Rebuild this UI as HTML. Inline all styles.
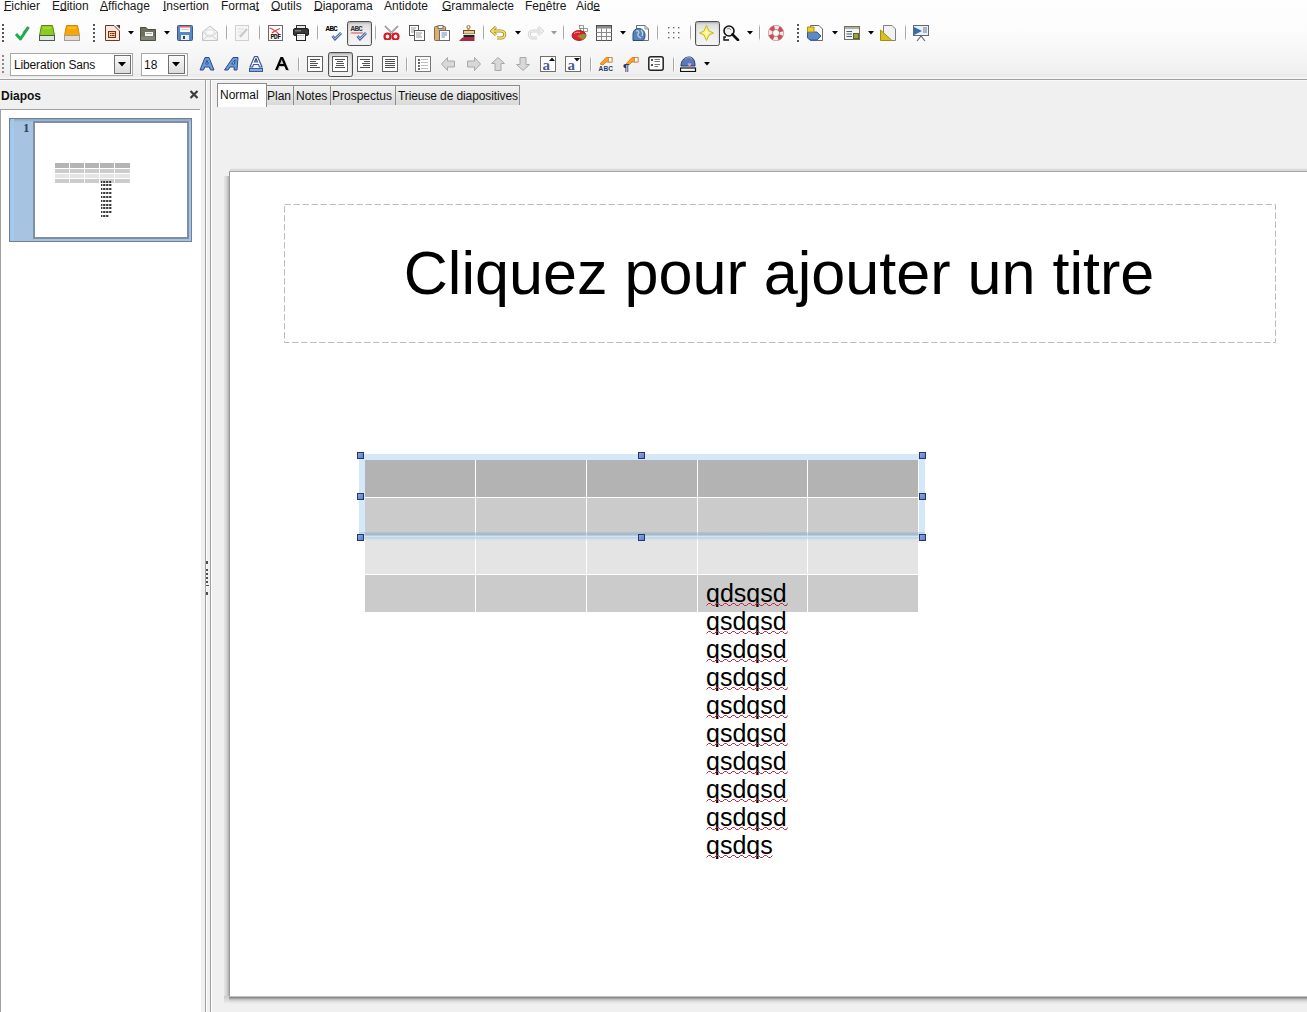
<!DOCTYPE html>
<html><head><meta charset="utf-8">
<style>
html,body{margin:0;padding:0;}
body{width:1307px;height:1012px;position:relative;overflow:hidden;background:#f0f0f0;font-family:"Liberation Sans",sans-serif;}
.a{position:absolute;}
#tb{left:0;top:0;width:1307px;height:79px;background:linear-gradient(#fefefe 0px,#fcfcfc 30px,#f7f7f7 50px,#f0f0f0 73px);}
#tbl1{left:0;top:74px;width:1307px;height:1px;background:#e7e7e7;}
#tbl2{left:0;top:76px;width:1307px;height:1px;background:#e9e9e9;}
#tbl3{left:0;top:77px;width:1307px;height:2px;background:#f5f5f5;}
#tbline{left:0;top:79px;width:1307px;height:1px;background:#a0a0a0;}
.menu{top:-2px;font-size:12px;color:#1a1a1a;white-space:nowrap;line-height:16px;}
.menu u{text-decoration:underline;text-underline-offset:0px;}
.tabt{font-size:12px;line-height:14px;color:#111;white-space:nowrap;}
.tab{top:85px;height:19px;border:1px solid #8c8c8c;border-bottom:none;background:linear-gradient(#f2f2f2,#d9d9d9);font-size:12px;line-height:18px;color:#111;white-space:nowrap;}
</style></head><body>
<div id="tb" class="a"></div>
<div id="tbl1" class="a"></div>
<div id="tbl2" class="a"></div>
<div id="tbl3" class="a"></div>
<div id="tbline" class="a"></div>

<!-- TB START -->
<svg class="a" style="left:2px;top:24px" width="2" height="19" ><rect x="0" y="0" width="2" height="2" fill="#555"/><rect x="0" y="4" width="2" height="2" fill="#555"/><rect x="0" y="8" width="2" height="2" fill="#555"/><rect x="0" y="12" width="2" height="2" fill="#555"/><rect x="0" y="16" width="2" height="2" fill="#555"/></svg>
<svg class="a" style="left:14px;top:25px" width="16" height="16" ><path d="M2,9 L6.5,14 L14.5,2" fill="none" stroke="#1fae4e" stroke-width="3" stroke-linejoin="round"/><path d="M9,8 L14.5,2" fill="none" stroke="#4a8a6a" stroke-width="2" opacity="0.6"/></svg>
<svg class="a" style="left:39px;top:25px" width="17" height="16" ><path d="M2.5,0.5 L13.5,0.5 L15.5,10.5 L0.5,10.5 Z" fill="#8ccc1c" stroke="#5b8a12"/><rect x="0.5" y="10.5" width="15" height="5" fill="#dfe6dc" stroke="#4d5a55"/><path d="M4,3 L12,3" stroke="#b6e85a"/></svg>
<svg class="a" style="left:64px;top:25px" width="17" height="16" ><path d="M2.5,0.5 L13.5,0.5 L15.5,10.5 L0.5,10.5 Z" fill="#f6a800" stroke="#d08a10"/><rect x="0.5" y="10.5" width="15" height="5" fill="#e2dcd8" stroke="#a49c98"/><path d="M4,3 L12,3" stroke="#ffd060"/></svg>
<svg class="a" style="left:93px;top:24px" width="2" height="19" ><rect x="0" y="0" width="2" height="2" fill="#555"/><rect x="0" y="4" width="2" height="2" fill="#555"/><rect x="0" y="8" width="2" height="2" fill="#555"/><rect x="0" y="12" width="2" height="2" fill="#555"/><rect x="0" y="16" width="2" height="2" fill="#555"/></svg>
<svg class="a" style="left:105px;top:25px" width="15" height="16" ><path d="M0.5,0.5 L9,0.5 L14.5,6 L14.5,15.5 L0.5,15.5 Z" fill="#fbe6d8" stroke="#5e3c2c"/><path d="M11,0 L15,0 L15,4 Z" fill="#5e3c2c"/><rect x="3.5" y="6.5" width="7" height="6" fill="#f6c8a8" stroke="#6a3a20"/><rect x="5" y="8" width="1.5" height="1" fill="#6a3a20"/><rect x="7" y="8" width="2.5" height="1" fill="#6a3a20"/><rect x="5" y="10" width="1.5" height="1" fill="#6a3a20"/><rect x="7" y="10" width="2.5" height="1" fill="#6a3a20"/></svg>
<svg class="a" style="left:128px;top:31px" width="6" height="4" ><path d="M0,0 L6,0 L3,3.5 Z" fill="#000"/></svg>
<svg class="a" style="left:140px;top:26px" width="17" height="15" ><path d="M0.5,1.5 L6,1.5 L8,3.5 L15.5,3.5 L15.5,14.5 L0.5,14.5 Z" fill="#6b7060" stroke="#4a4e40"/><rect x="5" y="6" width="8" height="4" fill="#f4f4f0"/><rect x="6" y="7" width="6" height="1" fill="#aaa"/><rect x="1" y="10.5" width="14" height="3.5" fill="#80867a"/></svg>
<svg class="a" style="left:164px;top:31px" width="6" height="4" ><path d="M0,0 L6,0 L3,3.5 Z" fill="#000"/></svg>
<svg class="a" style="left:177px;top:25px" width="16" height="16" ><rect x="0.5" y="0.5" width="15" height="15" rx="1" fill="#5c86c0" stroke="#3c5a8a"/><rect x="3" y="1" width="10" height="6" fill="#f8f8f8"/><rect x="3" y="1" width="10" height="1.5" fill="#e86060"/><rect x="4" y="4" width="8" height="1" fill="#c8d4e8"/><rect x="4" y="10" width="8" height="5" fill="#e8eef6"/><rect x="6" y="11" width="2" height="3" fill="#345"/></svg>
<svg class="a" style="left:202px;top:25px" width="17" height="16" ><path d="M0.5,7 L8,1 L15.5,7 L15.5,15.5 L0.5,15.5 Z" fill="#f4f4f4" stroke="#c4c4c4"/><path d="M0.5,7 L8,12 L15.5,7 M0.5,15.5 L6,10.5 M15.5,15.5 L10,10.5" fill="none" stroke="#cfcfcf"/><rect x="4" y="5" width="8" height="5" fill="#fafafa" stroke="#d8d8d8" stroke-width="0.8"/></svg>
<div class="a" style="left:226px;top:24px;width:1px;height:17px;background:linear-gradient(rgba(170,170,170,0),#a8a8a8 20%,#a8a8a8 80%,rgba(170,170,170,0))"></div>
<div class="a" style="left:227px;top:24px;width:1px;height:17px;background:rgba(255,255,255,0.7)"></div>
<svg class="a" style="left:235px;top:25px" width="14" height="16" ><rect x="0.5" y="0.5" width="13" height="15" fill="#f6f6f6" stroke="#d0d0d0"/><path d="M3,4 L9,4 M3,7 L7,7 M3,10 L6,10" stroke="#dcdcdc"/><path d="M5,12 L12,4" stroke="#c8c8c8" stroke-width="2"/></svg>
<div class="a" style="left:259px;top:24px;width:1px;height:17px;background:linear-gradient(rgba(170,170,170,0),#a8a8a8 20%,#a8a8a8 80%,rgba(170,170,170,0))"></div>
<div class="a" style="left:260px;top:24px;width:1px;height:17px;background:rgba(255,255,255,0.7)"></div>
<svg class="a" style="left:268px;top:25px" width="15" height="16" ><rect x="0.5" y="0.5" width="14" height="15" fill="#fafafa" stroke="#6a6a6a"/><path d="M1.5,3 C5,4 8,6 11,9.5 M4,8 C6,6 9,4.5 12,3.5" fill="none" stroke="#e04048" stroke-width="1.3"/><text x="7.5" y="14" font-family="Liberation Mono" font-weight="bold" font-size="6.5" text-anchor="middle" fill="#111" letter-spacing="-0.5">PDF</text></svg>
<svg class="a" style="left:293px;top:25px" width="17" height="16" ><rect x="3.5" y="0.5" width="9" height="4" fill="#e8e8e8" stroke="#333"/><rect x="0.5" y="3.5" width="15" height="7" rx="1.5" fill="#3a3a3a" stroke="#1e1e1e"/><rect x="3.5" y="8.5" width="9" height="7" fill="#f4f4f4" stroke="#222"/><rect x="4" y="10" width="7" height="1" fill="#bbb"/><rect x="2" y="5" width="6" height="1.5" fill="#777"/></svg>
<div class="a" style="left:317px;top:24px;width:1px;height:17px;background:linear-gradient(rgba(170,170,170,0),#a8a8a8 20%,#a8a8a8 80%,rgba(170,170,170,0))"></div>
<div class="a" style="left:318px;top:24px;width:1px;height:17px;background:rgba(255,255,255,0.7)"></div>
<svg class="a" style="left:325px;top:25px" width="18" height="16" ><text x="0.5" y="6" font-family="Liberation Mono" font-weight="bold" font-size="7.5" fill="#000" letter-spacing="-0.6">ABC</text><path d="M7.5,11 L10,14 L16,8" fill="none" stroke="#2a4a8a" stroke-width="2.6"/><path d="M7.5,11 L10,14 L16,8" fill="none" stroke="#a8c4ec" stroke-width="1.1"/></svg>
<div class="a" style="left:347px;top:21px;width:23px;height:23px;border:1px solid #505050;border-radius:2.5px;background:linear-gradient(#d8d8d8,#ececec 40%,#f4f4f4);box-shadow:inset 0 1px 2px rgba(0,0,0,0.25)"></div>
<svg class="a" style="left:350px;top:25px" width="18" height="16" ><text x="0.5" y="6" font-family="Liberation Mono" font-weight="bold" font-size="7.5" fill="#333" letter-spacing="-0.6">ABC</text><path d="M1,8.5 L2,7.5 L3,8.5 L4,7.5 L5,8.5 L6,7.5 L7,8.5 L8,7.5 L9,8.5 L10,7.5 L11,8.5 L12,7.5 L13,8.5" fill="none" stroke="#d02030" stroke-width="0.9"/><path d="M7.5,11 L10,14 L16,8" fill="none" stroke="#2a4a8a" stroke-width="2.6"/><path d="M7.5,11 L10,14 L16,8" fill="none" stroke="#a8c4ec" stroke-width="1.1"/></svg>
<div class="a" style="left:375px;top:24px;width:1px;height:17px;background:linear-gradient(rgba(170,170,170,0),#a8a8a8 20%,#a8a8a8 80%,rgba(170,170,170,0))"></div>
<div class="a" style="left:376px;top:24px;width:1px;height:17px;background:rgba(255,255,255,0.7)"></div>
<svg class="a" style="left:383px;top:25px" width="18" height="15" ><path d="M2,1 L11,10 M15,1 L6,10" stroke="#777" stroke-width="1.6"/><path d="M2.5,1 L10,9 M14.5,1 L7,9" stroke="#eee" stroke-width="0.6"/><circle cx="4.5" cy="11.5" r="3" fill="none" stroke="#d41a22" stroke-width="2.2"/><circle cx="12.5" cy="11.5" r="3" fill="none" stroke="#d41a22" stroke-width="2.2"/></svg>
<svg class="a" style="left:409px;top:25px" width="17" height="16" ><rect x="0.5" y="0.5" width="9" height="10" fill="#fff" stroke="#555"/><path d="M2,3 L7,3 M2,5 L6,5 M2,7 L7,7" stroke="#999"/><rect x="5.5" y="5.5" width="10" height="10" fill="#fff" stroke="#555"/><path d="M7,8 L13,8 M7,10 L12,10 M7,12 L13,12" stroke="#999"/></svg>
<svg class="a" style="left:434px;top:25px" width="16" height="16" ><rect x="0.5" y="1.5" width="11" height="14" rx="1" fill="#d8b070" stroke="#8a6a3a"/><rect x="4" y="0.5" width="5" height="3" fill="#eee" stroke="#777"/><rect x="5.5" y="5.5" width="10" height="10" fill="#fff" stroke="#6a6a6a"/><path d="M7.5,8 L13,8 M7.5,10 L13,10 M7.5,12 L11,12" stroke="#6a8ac0"/></svg>
<svg class="a" style="left:459px;top:25px" width="17" height="16" ><circle cx="9.5" cy="2" r="1.6" fill="none" stroke="#9a7030"/><rect x="8.5" y="3" width="2" height="3" fill="#c89040"/><rect x="4.5" y="5.5" width="11" height="3" fill="#f0c890" stroke="#7a5020"/><rect x="5" y="8.5" width="10" height="1.5" fill="#c8f0c8"/><rect x="4.5" y="10" width="11" height="2" fill="#222"/><path d="M0,16 L3,13 L5,12 L15.5,12 L15.5,16 Z" fill="#a82a4a"/></svg>
<div class="a" style="left:483px;top:24px;width:1px;height:17px;background:linear-gradient(rgba(170,170,170,0),#a8a8a8 20%,#a8a8a8 80%,rgba(170,170,170,0))"></div>
<div class="a" style="left:484px;top:24px;width:1px;height:17px;background:rgba(255,255,255,0.7)"></div>
<svg class="a" style="left:490px;top:26px" width="18" height="14" ><path d="M6,1 L1.5,5 L6,9 M1.5,5 L11,5 C16,5 16,12 11,12 L7,12" fill="none" stroke="#a08a20" stroke-width="3" stroke-linejoin="round"/><path d="M6,1 L1.5,5 L6,9 M1.5,5 L11,5 C16,5 16,12 11,12 L7,12" fill="none" stroke="#f6e070" stroke-width="1.4" stroke-linejoin="round"/></svg>
<svg class="a" style="left:515px;top:31px" width="6" height="4" ><path d="M0,0 L6,0 L3,3.5 Z" fill="#000"/></svg>
<svg class="a" style="left:526px;top:26px" width="18" height="14" ><path d="M12,1 L16.5,5 L12,9 M16.5,5 L7,5 C2,5 2,12 7,12 L11,12" fill="none" stroke="#d4d4d4" stroke-width="3" stroke-linejoin="round"/><path d="M12,1 L16.5,5 L12,9 M16.5,5 L7,5 C2,5 2,12 7,12 L11,12" fill="none" stroke="#f2f2f2" stroke-width="1.2" stroke-linejoin="round"/></svg>
<svg class="a" style="left:551px;top:31px" width="6" height="4" ><path d="M0,0 L6,0 L3,3.5 Z" fill="#999"/></svg>
<div class="a" style="left:563px;top:24px;width:1px;height:17px;background:linear-gradient(rgba(170,170,170,0),#a8a8a8 20%,#a8a8a8 80%,rgba(170,170,170,0))"></div>
<div class="a" style="left:564px;top:24px;width:1px;height:17px;background:rgba(255,255,255,0.7)"></div>
<svg class="a" style="left:571px;top:25px" width="18" height="16" ><rect x="8.5" y="0.5" width="4" height="3" fill="#fff" stroke="#7a8a7a" stroke-width="0.8"/><rect x="12.5" y="3.5" width="4" height="3" fill="#fff" stroke="#7a8a7a" stroke-width="0.8"/><rect x="9.5" y="3.5" width="3" height="3" fill="#fff" stroke="#7a8a7a" stroke-width="0.8"/><ellipse cx="8" cy="10.5" rx="7" ry="5" fill="#e0202a" stroke="#8a1018" stroke-width="0.8"/><path d="M6,11 C9,10 12,8 15,9.5 C15,12 14,14 12,15 Z" fill="#8aa030" opacity="0.9"/><path d="M3,8.5 C5,7 7,7 9,7.5" stroke="#ff9a9a" fill="none"/></svg>
<svg class="a" style="left:596px;top:25px" width="17" height="16" ><rect x="0.5" y="0.5" width="15" height="15" fill="#fafafa" stroke="#505050"/><rect x="1" y="1" width="14" height="2.5" fill="#8a8a8a"/><path d="M0.5,7.5 L15.5,7.5 M0.5,11.5 L15.5,11.5 M5.5,3.5 L5.5,15.5 M10.5,3.5 L10.5,15.5" stroke="#8a8a8a"/></svg>
<svg class="a" style="left:620px;top:31px" width="6" height="4" ><path d="M0,0 L6,0 L3,3.5 Z" fill="#000"/></svg>
<svg class="a" style="left:632px;top:25px" width="18" height="16" ><path d="M4.5,0.5 L13,0.5 L16.5,4 L16.5,15.5 L4.5,15.5 Z" fill="#fafafa" stroke="#707070"/><path d="M13,0.5 L13,4 L16.5,4" fill="none" stroke="#909090"/><path d="M1,15.5 L1,9 C1,5.5 3.5,3.5 6.5,3.5 C10.5,3.5 13,6.5 13,10 C13,13 12,15 11,15.5 Z" fill="#5a84b8" stroke="#2a4a78"/><path d="M4,6 C6,5 8,7 6,9 C5,11 7,12 9,13 M9,5 C11,7 11,9 10,11" stroke="#c0d8f0" fill="none" stroke-width="1.2"/></svg>
<div class="a" style="left:657px;top:24px;width:1px;height:17px;background:linear-gradient(rgba(170,170,170,0),#a8a8a8 20%,#a8a8a8 80%,rgba(170,170,170,0))"></div>
<div class="a" style="left:658px;top:24px;width:1px;height:17px;background:rgba(255,255,255,0.7)"></div>
<svg class="a" style="left:668px;top:27px" width="12" height="12" ><rect x="0" y="0" width="1.4" height="1.4" fill="#6a6a6a"/><rect x="0" y="5" width="1.4" height="1.4" fill="#6a6a6a"/><rect x="0" y="10" width="1.4" height="1.4" fill="#6a6a6a"/><rect x="5" y="0" width="1.4" height="1.4" fill="#6a6a6a"/><rect x="5" y="5" width="1.4" height="1.4" fill="#6a6a6a"/><rect x="5" y="10" width="1.4" height="1.4" fill="#6a6a6a"/><rect x="10" y="0" width="1.4" height="1.4" fill="#6a6a6a"/><rect x="10" y="5" width="1.4" height="1.4" fill="#6a6a6a"/><rect x="10" y="10" width="1.4" height="1.4" fill="#6a6a6a"/></svg>
<div class="a" style="left:690px;top:24px;width:1px;height:17px;background:linear-gradient(rgba(170,170,170,0),#a8a8a8 20%,#a8a8a8 80%,rgba(170,170,170,0))"></div>
<div class="a" style="left:691px;top:24px;width:1px;height:17px;background:rgba(255,255,255,0.7)"></div>
<div class="a" style="left:695px;top:21px;width:23px;height:23px;border:1px solid #505050;border-radius:2.5px;background:linear-gradient(#d8d8d8,#ececec 40%,#f4f4f4);box-shadow:inset 0 1px 2px rgba(0,0,0,0.25)"></div>
<svg class="a" style="left:699px;top:25px" width="16" height="16" ><path d="M7.5,0.5 L10,6 L14.5,8 L10,10 L7.5,15.5 L5,10 L0.5,8 L5,6 Z" fill="#f8f070" stroke="#c8b820"/><path d="M7.5,4 L9,7 L11,8 L9,9 L7.5,12 L6,9 L4,8 L6,7 Z" fill="#fff8b0"/></svg>
<svg class="a" style="left:723px;top:25px" width="17" height="16" ><circle cx="6" cy="6" r="5" fill="#f0f0f0" stroke="#111" stroke-width="1.6"/><path d="M3,12 L1,12 L1,15 L6,15" fill="none" stroke="#111" stroke-width="1.4"/><path d="M9.5,9.5 L15,15" stroke="#111" stroke-width="2.6" stroke-linecap="round"/><path d="M4,4 C5,3 7,3 8,5" stroke="#888" fill="none"/></svg>
<svg class="a" style="left:747px;top:31px" width="6" height="4" ><path d="M0,0 L6,0 L3,3.5 Z" fill="#000"/></svg>
<div class="a" style="left:759px;top:24px;width:1px;height:17px;background:linear-gradient(rgba(170,170,170,0),#a8a8a8 20%,#a8a8a8 80%,rgba(170,170,170,0))"></div>
<div class="a" style="left:760px;top:24px;width:1px;height:17px;background:rgba(255,255,255,0.7)"></div>
<svg class="a" style="left:768px;top:25px" width="17" height="16" ><circle cx="8" cy="8" r="5.6" fill="none" stroke="#f4e8e8" stroke-width="4.2"/><circle cx="8" cy="8" r="5.6" fill="none" stroke="#d84858" stroke-width="4.2" stroke-dasharray="4.4 4.4" stroke-dashoffset="-2.2"/><circle cx="8" cy="8" r="7.7" fill="none" stroke="#9a7a7a" stroke-width="0.6"/><circle cx="8" cy="8" r="3.5" fill="none" stroke="#8a7060" stroke-width="0.7"/></svg>
<svg class="a" style="left:797px;top:24px" width="2" height="20" ><rect x="0" y="0" width="2" height="2" fill="#555"/><rect x="0" y="4" width="2" height="2" fill="#555"/><rect x="0" y="8" width="2" height="2" fill="#555"/><rect x="0" y="12" width="2" height="2" fill="#555"/><rect x="0" y="16" width="2" height="2" fill="#555"/></svg>
<svg class="a" style="left:807px;top:25px" width="17" height="16" ><path d="M3.5,0.5 L12,0.5 L15.5,4 L15.5,15.5 L3.5,15.5 Z" fill="#f8f8f8" stroke="#6a6a6a"/><path d="M0.5,7 L10,7 L14,11 L10,15 L3,15 L0.5,13 Z" fill="#5a8ac8" stroke="#305a98"/><path d="M0.5,2 L7,2 L7,7 L0.5,7 Z" fill="#f0d020" stroke="#b09010"/></svg>
<svg class="a" style="left:832px;top:31px" width="6" height="4" ><path d="M0,0 L6,0 L3,3.5 Z" fill="#000"/></svg>
<svg class="a" style="left:844px;top:26px" width="17" height="15" ><rect x="0.5" y="0.5" width="15" height="13" fill="#f4f4f0" stroke="#707060"/><rect x="1" y="1" width="14" height="2" fill="#b0b0a0"/><path d="M2.5,5.5 L8,5.5 M2.5,8 L8,8 M2.5,10.5 L8,10.5" stroke="#3a5a9a" stroke-width="1.2"/><rect x="9.5" y="7.5" width="5" height="5" fill="#a0a040" stroke="#606020"/></svg>
<svg class="a" style="left:868px;top:31px" width="6" height="4" ><path d="M0,0 L6,0 L3,3.5 Z" fill="#000"/></svg>
<svg class="a" style="left:880px;top:25px" width="17" height="16" ><path d="M3.5,0.5 L12,0.5 L15.5,4 L15.5,15.5 L3.5,15.5 Z" fill="#f2f2f6" stroke="#808080"/><path d="M0.5,5 L0.5,15.5 L12,15.5 Z" fill="#d8c020" stroke="#a09010"/></svg>
<div class="a" style="left:905px;top:24px;width:1px;height:17px;background:linear-gradient(rgba(170,170,170,0),#a8a8a8 20%,#a8a8a8 80%,rgba(170,170,170,0))"></div>
<div class="a" style="left:906px;top:24px;width:1px;height:17px;background:rgba(255,255,255,0.7)"></div>
<svg class="a" style="left:913px;top:25px" width="17" height="17" ><rect x="0.5" y="0.5" width="15" height="10" fill="#e8f0f8" stroke="#5a6a7a"/><path d="M1,2 L9,6 L1,10 Z" fill="#3a6aaa"/><path d="M10,3 L14,3 M10,5 L14,5 M10,7 L14,7" stroke="#6a7a8a"/><path d="M8,11 L4,16 M8,11 L12,16" stroke="#6a6a6a" stroke-width="1.2"/></svg>
<svg class="a" style="left:2px;top:55px" width="2" height="18" ><rect x="0" y="0" width="2" height="2" fill="#8a8a8a"/><rect x="0" y="4" width="2" height="2" fill="#8a8a8a"/><rect x="0" y="8" width="2" height="2" fill="#8a8a8a"/><rect x="0" y="12" width="2" height="2" fill="#8a8a8a"/><rect x="0" y="16" width="2" height="2" fill="#8a8a8a"/></svg>
<div class="a" style="left:10px;top:53px;width:121px;height:21px;border:1px solid #a8a8a8;background:#fff"></div>
<div class="a" style="left:114px;top:55px;width:15px;height:17px;border:1px solid #707070;background:linear-gradient(#fafafa,#dcdcdc)"></div>
<svg class="a" style="left:118px;top:62px" width="9" height="5" ><path d="M0,0 L8,0 L4,4.5 Z" fill="#000"/></svg>
<div class="a" style="left:14px;top:58px;font-size:12px;line-height:14px;color:#111;white-space:nowrap;letter-spacing:-0.15px">Liberation Sans</div>
<div class="a" style="left:141px;top:53px;width:45px;height:21px;border:1px solid #a8a8a8;background:#fff"></div>
<div class="a" style="left:168px;top:55px;width:15px;height:17px;border:1px solid #707070;background:linear-gradient(#fafafa,#dcdcdc)"></div>
<svg class="a" style="left:172px;top:62px" width="9" height="5" ><path d="M0,0 L8,0 L4,4.5 Z" fill="#000"/></svg>
<div class="a" style="left:144px;top:58px;font-size:12px;line-height:14px;color:#111;white-space:nowrap">18</div>
<svg class="a" style="left:199px;top:57px" width="17" height="14" ><path d="M1,13 L6,0.5 L10,0.5 L15,13 L11.5,13 L10.3,10 L5.7,10 L4.5,13 Z M6.7,7 L9.3,7 L8,3.5 Z" fill="#6a9ad8" stroke="#2a4a8a" stroke-width="1" fill-rule="evenodd"/></svg>
<svg class="a" style="left:224px;top:57px" width="17" height="14" ><path d="M0.5,13 L9,0.5 L14,0.5 L13,13 L10,13 L10.3,10 L6,10 L4,13 Z M7.8,7 L10.5,7 L11,3 Z" fill="#6a9ad8" stroke="#2a4a8a" stroke-width="1" fill-rule="evenodd"/></svg>
<svg class="a" style="left:249px;top:56px" width="16" height="17" ><path d="M1,11 L5.5,0.5 L8.5,0.5 L13,11 L10.5,11 L9.5,8.5 L4.5,8.5 L3.5,11 Z M5.5,6 L8.5,6 L7,2.5 Z" fill="#ffffff" stroke="#3a5a9a" stroke-width="1.2" fill-rule="evenodd"/><rect x="0.5" y="12.5" width="13" height="3" fill="#8aaad8" stroke="#3a5a9a"/></svg>
<svg class="a" style="left:274px;top:56px" width="17" height="16" ><path d="M2,15 L7.5,2 L10,2 L15.5,15 L13,15 L11.3,11 L6.2,11 L4.5,15 Z" fill="#aaa" opacity="0.6"/><path d="M1,14 L6.5,1 L9,1 L14.5,14 L12,14 L10.3,10 L5.2,10 L3.5,14 Z M6,8 L9.5,8 L7.75,3.5 Z" fill="#000" fill-rule="evenodd"/></svg>
<div class="a" style="left:298px;top:56px;width:1px;height:17px;background:linear-gradient(rgba(170,170,170,0),#a8a8a8 20%,#a8a8a8 80%,rgba(170,170,170,0))"></div>
<div class="a" style="left:299px;top:56px;width:1px;height:17px;background:rgba(255,255,255,0.7)"></div>
<svg class="a" style="left:307px;top:56px" width="16" height="16" ><rect x="0.5" y="0.5" width="15" height="15" fill="#fff" stroke="#606060"/><rect x="3" y="3" width="10" height="1" fill="#505050"/><rect x="3" y="5" width="6" height="1" fill="#505050"/><rect x="3" y="7" width="8" height="1" fill="#505050"/><rect x="3" y="9" width="7" height="1" fill="#505050"/><rect x="3" y="11" width="10" height="1" fill="#505050"/></svg>
<div class="a" style="left:328px;top:52px;width:23px;height:23px;border:1px solid #505050;border-radius:2.5px;background:linear-gradient(#d8d8d8,#ececec 40%,#f4f4f4);box-shadow:inset 0 1px 2px rgba(0,0,0,0.25)"></div>
<svg class="a" style="left:332px;top:56px" width="16" height="16" ><rect x="0.5" y="0.5" width="15" height="15" fill="#fff" stroke="#606060"/><rect x="3" y="3" width="10" height="1" fill="#505050"/><rect x="5" y="5" width="6" height="1" fill="#505050"/><rect x="4" y="7" width="8" height="1" fill="#505050"/><rect x="4" y="9" width="8" height="1" fill="#505050"/><rect x="3" y="11" width="10" height="1" fill="#505050"/></svg>
<svg class="a" style="left:357px;top:56px" width="16" height="16" ><rect x="0.5" y="0.5" width="15" height="15" fill="#fff" stroke="#606060"/><rect x="3" y="3" width="10" height="1" fill="#505050"/><rect x="7" y="5" width="6" height="1" fill="#505050"/><rect x="5" y="7" width="8" height="1" fill="#505050"/><rect x="6" y="9" width="7" height="1" fill="#505050"/><rect x="3" y="11" width="10" height="1" fill="#505050"/></svg>
<svg class="a" style="left:382px;top:56px" width="16" height="16" ><rect x="0.5" y="0.5" width="15" height="15" fill="#fff" stroke="#606060"/><rect x="3" y="3" width="10" height="1" fill="#505050"/><rect x="3" y="5" width="10" height="1" fill="#505050"/><rect x="3" y="7" width="10" height="1" fill="#505050"/><rect x="3" y="9" width="10" height="1" fill="#505050"/><rect x="3" y="11" width="10" height="1" fill="#505050"/></svg>
<div class="a" style="left:406px;top:56px;width:1px;height:17px;background:linear-gradient(rgba(170,170,170,0),#a8a8a8 20%,#a8a8a8 80%,rgba(170,170,170,0))"></div>
<div class="a" style="left:407px;top:56px;width:1px;height:17px;background:rgba(255,255,255,0.7)"></div>
<svg class="a" style="left:415px;top:56px" width="16" height="16" ><rect x="0.5" y="0.5" width="15" height="15" fill="#fff" stroke="#7a7a7a"/><rect x="3" y="3" width="2" height="2" fill="#666"/><rect x="3" y="6" width="2" height="2" fill="#666"/><rect x="3" y="9" width="2" height="2" fill="#666"/><rect x="3" y="12" width="2" height="2" fill="#666"/><path d="M6,3.5 L13,3.5 M6,6.5 L13,6.5 M6,9.5 L13,9.5 M6,12.5 L13,12.5" stroke="#bbb"/></svg>
<svg class="a" style="left:441px;top:57px" width="14" height="14" ><path d="M0.5,7 L6.5,0.5 L6.5,4 L13.5,4 L13.5,10 L6.5,10 L6.5,13.5 Z" fill="#d8d8d8" stroke="#a8a8a8"/></svg>
<svg class="a" style="left:467px;top:57px" width="14" height="14" ><path d="M13.5,7 L7.5,0.5 L7.5,4 L0.5,4 L0.5,10 L7.5,10 L7.5,13.5 Z" fill="#d8d8d8" stroke="#a8a8a8"/></svg>
<svg class="a" style="left:491px;top:57px" width="14" height="14" ><path d="M7,0.5 L13.5,6.5 L10,6.5 L10,13.5 L4,13.5 L4,6.5 L0.5,6.5 Z" fill="#d8d8d8" stroke="#a8a8a8"/></svg>
<svg class="a" style="left:516px;top:57px" width="14" height="14" ><path d="M7,13.5 L13.5,7.5 L10,7.5 L10,0.5 L4,0.5 L4,7.5 L0.5,7.5 Z" fill="#d8d8d8" stroke="#a8a8a8"/></svg>
<svg class="a" style="left:540px;top:56px" width="16" height="16" ><rect x="0.5" y="0.5" width="15" height="15" fill="#fff" stroke="#707070"/><text x="2.5" y="13.5" font-family="Liberation Serif" font-weight="bold" font-size="15" fill="#4a5a9a">a</text><path d="M9,5 L12,1.5 L15,5 Z" fill="#111"/></svg>
<svg class="a" style="left:565px;top:56px" width="16" height="16" ><rect x="0.5" y="0.5" width="15" height="15" fill="#fff" stroke="#707070"/><text x="2.5" y="13.5" font-family="Liberation Serif" font-weight="bold" font-size="15" fill="#4a5a9a">a</text><path d="M9,2 L15,2 L12,5.5 Z" fill="#111"/></svg>
<div class="a" style="left:590px;top:56px;width:1px;height:17px;background:linear-gradient(rgba(170,170,170,0),#a8a8a8 20%,#a8a8a8 80%,rgba(170,170,170,0))"></div>
<div class="a" style="left:591px;top:56px;width:1px;height:17px;background:rgba(255,255,255,0.7)"></div>
<svg class="a" style="left:598px;top:56px" width="16" height="16" ><path d="M2,8 L8,1.5 L14,1.5 L14,6 L8,6 L5,9 Z" fill="#f8a020" stroke="#e07010" stroke-width="0.8"/><rect x="10.5" y="1.5" width="3.5" height="4.5" fill="#fff" stroke="#c08040" stroke-width="0.8"/><text x="0.5" y="15" font-family="Liberation Sans" font-weight="bold" font-size="6.5" fill="#1e3a6a" letter-spacing="0.2">ABC</text></svg>
<svg class="a" style="left:623px;top:56px" width="16" height="16" ><path d="M3,8 L9,1.5 L15,1.5 L15,6 L9,6 L6,9 Z" fill="#f8a020" stroke="#e07010" stroke-width="0.8"/><rect x="11.5" y="1.5" width="3.5" height="4.5" fill="#fff" stroke="#c08040" stroke-width="0.8"/><text x="0" y="16" font-family="Liberation Sans" font-weight="bold" font-size="11" fill="#1e3a6a">&#182;</text></svg>
<svg class="a" style="left:648px;top:56px" width="16" height="15" ><rect x="0.8" y="0.8" width="14.4" height="13.4" rx="2" fill="#fff" stroke="#222" stroke-width="1.5"/><rect x="3" y="3" width="2" height="2" fill="#555"/><rect x="3" y="8" width="2" height="2" fill="#555"/><path d="M6.5,3.5 L12,3.5 M6.5,5.5 L12,5.5 M6.5,8.5 L12,8.5 M6.5,10.5 L10,10.5" stroke="#777"/></svg>
<div class="a" style="left:673px;top:56px;width:1px;height:17px;background:linear-gradient(rgba(170,170,170,0),#a8a8a8 20%,#a8a8a8 80%,rgba(170,170,170,0))"></div>
<div class="a" style="left:674px;top:56px;width:1px;height:17px;background:rgba(255,255,255,0.7)"></div>
<svg class="a" style="left:680px;top:56px" width="17" height="16" ><path d="M1,10 C1,4 5,1 9,1 C13,1 15,4 15,10 Z" fill="#5a7ab8" stroke="#2a3a6a"/><path d="M5,3 C7,1 10,1 12,3" stroke="#aac" fill="none"/><path d="M8,9 C7,7 9,6 9.5,8 C10,6 12,7 11,9 L9.5,10.5 Z" fill="#e0a0b0"/><rect x="0.5" y="12" width="15" height="3.5" fill="#fff" stroke="#111" stroke-width="1.2"/></svg>
<svg class="a" style="left:704px;top:62px" width="6" height="4" ><path d="M0,0 L6,0 L3,3.5 Z" fill="#000"/></svg>
<!-- TB END -->
<!-- menu -->
<div class="a menu" style="left:4px"><u>F</u>ichier</div>
<div class="a menu" style="left:52px">E<u>d</u>ition</div>
<div class="a menu" style="left:100px"><u>A</u>ffichage</div>
<div class="a menu" style="left:163px"><u>I</u>nsertion</div>
<div class="a menu" style="left:221px">Forma<u>t</u></div>
<div class="a menu" style="left:271px"><u>O</u>utils</div>
<div class="a menu" style="left:314px"><u>D</u>iaporama</div>
<div class="a menu" style="left:384px">Antidote</div>
<div class="a menu" style="left:442px"><u>G</u>rammalecte</div>
<div class="a menu" style="left:525px">Fe<u>n</u>être</div>
<div class="a menu" style="left:576px">Aid<u>e</u></div>

<!-- left panel -->
<div class="a" style="left:0;top:80px;width:1307px;height:1px;background:#f8f8f8"></div>
<div class="a" style="left:1px;top:89px;font-size:12px;font-weight:bold;color:#111">Diapos</div>
<div class="a" style="left:0;top:109px;width:200px;height:1px;background:#a0a0a0"></div>
<div class="a" style="left:0;top:110px;width:201px;height:902px;background:#fff"></div>
<div class="a" style="left:0;top:110px;width:1px;height:902px;background:#a0a0a0"></div>

<!-- close X -->
<svg class="a" style="left:188px;top:88px" width="12" height="14"><path d="M2.5,3 L9.5,10 M9.5,3 L2.5,10" stroke="#3c3c3c" stroke-width="2.2" stroke-linecap="butt"/></svg>
<!-- thumbnail -->
<div class="a" style="left:9px;top:118px;width:181px;height:122px;border:1px solid #6d8098;background:#a6c3e2"></div>
<div class="a" style="left:10px;top:119px;width:181px;height:3px;background:linear-gradient(#8fa6bf,#a6c3e2)"></div>
<div class="a" style="left:11px;top:119px;width:3px;height:121px;background:#a2c9ee"></div>
<div class="a" style="left:23px;top:121px;font-size:13px;font-weight:bold;font-family:'Liberation Serif',serif;color:#2b4563;line-height:14px">1</div>
<div class="a" style="left:33px;top:121px;width:156px;height:118px;background:#7f8fa3"></div>
<div class="a" style="left:35px;top:123px;width:152px;height:114px;background:#fff"></div>
<!-- thumb table -->
<div class="a" style="left:55px;top:163px;width:75px;height:20px;background:#fff"></div>
<div class="a" style="left:55px;top:163px;width:75px;height:5px;background:#b4b4b4"></div>
<div class="a" style="left:55px;top:169px;width:75px;height:4px;background:#cccccc"></div>
<div class="a" style="left:55px;top:174px;width:75px;height:4px;background:#e4e4e4"></div>
<div class="a" style="left:55px;top:179px;width:75px;height:4px;background:#cccccc"></div>
<div class="a" style="left:69px;top:163px;width:1px;height:20px;background:#fff"></div>
<div class="a" style="left:84px;top:163px;width:1px;height:20px;background:#fff"></div>
<div class="a" style="left:99px;top:163px;width:1px;height:20px;background:#fff"></div>
<div class="a" style="left:114px;top:163px;width:1px;height:20px;background:#fff"></div>

<div class="a" style="left:101px;top:180.50px;width:11px;height:2px;background:repeating-linear-gradient(90deg,#3a3a3a 0 1px,#b0b0b0 1px 2px,#555 2px 3px)"></div><div class="a" style="left:101px;top:184.35px;width:11px;height:2px;background:repeating-linear-gradient(90deg,#3a3a3a 0 1px,#b0b0b0 1px 2px,#555 2px 3px)"></div><div class="a" style="left:101px;top:188.20px;width:11px;height:2px;background:repeating-linear-gradient(90deg,#3a3a3a 0 1px,#b0b0b0 1px 2px,#555 2px 3px)"></div><div class="a" style="left:101px;top:192.05px;width:11px;height:2px;background:repeating-linear-gradient(90deg,#3a3a3a 0 1px,#b0b0b0 1px 2px,#555 2px 3px)"></div><div class="a" style="left:101px;top:195.90px;width:11px;height:2px;background:repeating-linear-gradient(90deg,#3a3a3a 0 1px,#b0b0b0 1px 2px,#555 2px 3px)"></div><div class="a" style="left:101px;top:199.75px;width:11px;height:2px;background:repeating-linear-gradient(90deg,#3a3a3a 0 1px,#b0b0b0 1px 2px,#555 2px 3px)"></div><div class="a" style="left:101px;top:203.60px;width:11px;height:2px;background:repeating-linear-gradient(90deg,#3a3a3a 0 1px,#b0b0b0 1px 2px,#555 2px 3px)"></div><div class="a" style="left:101px;top:207.45px;width:11px;height:2px;background:repeating-linear-gradient(90deg,#3a3a3a 0 1px,#b0b0b0 1px 2px,#555 2px 3px)"></div><div class="a" style="left:101px;top:211.30px;width:11px;height:2px;background:repeating-linear-gradient(90deg,#3a3a3a 0 1px,#b0b0b0 1px 2px,#555 2px 3px)"></div><div class="a" style="left:101px;top:215.15px;width:8px;height:2px;background:repeating-linear-gradient(90deg,#3a3a3a 0 1px,#b0b0b0 1px 2px,#555 2px 3px)"></div>
<!-- splitter -->
<div class="a" style="left:205px;top:80px;width:1px;height:932px;background:#a0a0a0"></div>
<div class="a" style="left:206px;top:80px;width:1px;height:932px;background:#fff"></div>
<div class="a" style="left:210px;top:80px;width:1px;height:932px;background:#a0a0a0"></div>
<div class="a" style="left:211px;top:80px;width:1px;height:932px;background:#fff"></div>


<div class="a" style="left:206px;top:561px;width:2px;height:3px;background:#505050"></div><div class="a" style="left:206px;top:569px;width:2px;height:2px;background:#505050"></div><div class="a" style="left:206px;top:573px;width:2px;height:2px;background:#505050"></div><div class="a" style="left:206px;top:577px;width:2px;height:2px;background:#505050"></div><div class="a" style="left:206px;top:581px;width:2px;height:2px;background:#505050"></div><div class="a" style="left:206px;top:585px;width:3px;height:1px;background:#505050"></div><div class="a" style="left:206px;top:592px;width:2px;height:3px;background:#505050"></div>
<!-- tabs -->
<div class="a" style="left:217px;top:83px;width:48px;height:23px;border:1px solid #8c8c8c;border-bottom:none;background:#fff"></div>
<div class="a tabt" style="left:220px;top:88px">Normal</div>
<div class="a tab" style="left:266px;width:26px"></div><div class="a tabt" style="left:267px;top:89px">Plan</div>
<div class="a tab" style="left:293px;width:36px"></div><div class="a tabt" style="left:296px;top:89px">Notes</div>
<div class="a tab" style="left:330px;width:64px"></div><div class="a tabt" style="left:332px;top:89px">Prospectus</div>
<div class="a tab" style="left:395px;width:123px"></div><div class="a tabt" style="left:398px;top:89px;letter-spacing:-0.1px">Trieuse de diapositives</div>

<!-- slide -->
<div class="a" style="left:224px;top:176px;width:5px;height:824px;background:linear-gradient(90deg,#e2e2e2 0 1px,#dcdcdc 1px 2px,#d2d2d2 2px 3px,#c8c8c8 3px 4px,#b4b4b4 4px 5px)"></div>
<div class="a" style="left:224px;top:172px;width:5px;height:4px;background:linear-gradient(rgba(240,240,240,1),rgba(240,240,240,0))"></div>
<div class="a" style="left:230px;top:168px;width:1077px;height:3px;background:linear-gradient(#ececec 0 1px,#dcdcdc 1px 2px,#d8d8d8 2px 3px)"></div>
<div class="a" style="left:229px;top:171px;width:1078px;height:826px;background:#a8a8a8"></div>
<div class="a" style="left:229px;top:172px;width:1px;height:825px;background:#9a9a9a"></div>
<div class="a" style="left:230px;top:172px;width:1077px;height:824px;background:#fff"></div>
<div class="a" style="left:229px;top:996px;width:1078px;height:8px;background:linear-gradient(#c0c0c0 0 1px,#8c8c8c 1px 2px,#a4a4a4 2px 3px,#c2c2c2 3px 4px,#d2d2d2 4px 5px,#dedede 5px 6px,#e6e6e6 6px 7px,#ececec 7px 8px)"></div>
<div class="a" style="left:224px;top:996px;width:5px;height:8px;background:linear-gradient(#c8c8c8,#f0f0f0)"></div>


<!-- title placeholder -->
<svg class="a" style="left:280px;top:200px" width="1000" height="146"><rect x="4.5" y="4.5" width="991" height="138" fill="none" stroke="#bdbdbd" stroke-width="1" stroke-dasharray="6.5 2.5"/></svg>
<div class="a" id="title" style="left:283px;top:238px;width:992px;text-align:center;font-size:61.1px;line-height:70px;color:#000;white-space:nowrap">Cliquez pour ajouter un titre</div>

<!-- table -->
<div class="a" style="left:365px;top:460px;width:553px;height:152px;background:#fff"></div>
<div class="a" style="left:365px;top:460px;width:553px;height:37px;background:#b3b3b3"></div>
<div class="a" style="left:365px;top:498px;width:553px;height:38px;background:#cbcbcb"></div>
<div class="a" style="left:365px;top:537px;width:553px;height:37px;background:#e4e4e4"></div>
<div class="a" style="left:365px;top:575px;width:553px;height:37px;background:#cbcbcb"></div>
<div class="a" style="left:475px;top:460px;width:1px;height:152px;background:#fff"></div>
<div class="a" style="left:586px;top:460px;width:1px;height:152px;background:#fff"></div>
<div class="a" style="left:697px;top:460px;width:1px;height:152px;background:#fff"></div>
<div class="a" style="left:807px;top:460px;width:1px;height:152px;background:#fff"></div>


<!-- selection frame -->
<div class="a" style="left:359px;top:454px;width:566px;height:6px;background:#d4e8f9"></div>
<div class="a" style="left:359px;top:460px;width:6px;height:73px;background:#d4e8f9"></div>
<div class="a" style="left:919px;top:460px;width:6px;height:73px;background:#d4e8f9"></div>
<div class="a" style="left:359px;top:532px;width:566px;height:9px;background:linear-gradient(rgba(140,180,215,0.3) 0px,rgba(120,165,205,0.45) 2px,rgba(120,165,205,0.45) 3px,rgba(200,230,250,0.8) 4px,rgba(170,205,235,0.6) 5px,rgba(150,190,225,0.4) 6px,rgba(200,220,240,0.2) 8px)"></div>
<div class="a" style="left:357px;top:452px;width:5px;height:5px;border:1px solid #26386a;background:linear-gradient(135deg,#8aa5e0,#5f7fc8)"></div>
<div class="a" style="left:357px;top:493px;width:5px;height:5px;border:1px solid #26386a;background:linear-gradient(135deg,#8aa5e0,#5f7fc8)"></div>
<div class="a" style="left:357px;top:534px;width:5px;height:5px;border:1px solid #26386a;background:linear-gradient(135deg,#8aa5e0,#5f7fc8)"></div>
<div class="a" style="left:638px;top:452px;width:5px;height:5px;border:1px solid #26386a;background:linear-gradient(135deg,#8aa5e0,#5f7fc8)"></div>
<div class="a" style="left:638px;top:534px;width:5px;height:5px;border:1px solid #26386a;background:linear-gradient(135deg,#8aa5e0,#5f7fc8)"></div>
<div class="a" style="left:919px;top:452px;width:5px;height:5px;border:1px solid #26386a;background:linear-gradient(135deg,#8aa5e0,#5f7fc8)"></div>
<div class="a" style="left:919px;top:493px;width:5px;height:5px;border:1px solid #26386a;background:linear-gradient(135deg,#8aa5e0,#5f7fc8)"></div>
<div class="a" style="left:919px;top:534px;width:5px;height:5px;border:1px solid #26386a;background:linear-gradient(135deg,#8aa5e0,#5f7fc8)"></div>

<!-- text -->
<div class="a" id="txt" style="left:706px;top:579px;font-size:25px;line-height:28px;color:#000;white-space:pre">qdsqsd
qsdqsd
qsdqsd
qsdqsd
qsdqsd
qsdqsd
qsdqsd
qsdqsd
qsdqsd
qsdqs</div>
<svg class="a" style="left:0;top:0" width="1307" height="1012"><g fill="none" stroke="#c41e3a" stroke-width="1" transform="translate(0.5,0.5)"><path d="M706,605 L708,603 L710,603 L712,605 L714,605 L716,603 L718,603 L720,605 L722,605 L724,603 L726,603 L728,605 L730,605 L732,603 L734,603 L736,605 L738,605 L740,603 L742,603 L744,605 L746,605 L748,603 L750,603 L752,605 L754,605 L756,603 L758,603 L760,605 L762,605 L764,603 L766,603 L768,605 L770,605 L772,603 L774,603 L776,605 L778,605 L780,603 L782,603 L784,605 L786,605 L787,603"/><path d="M706,633 L708,631 L710,631 L712,633 L714,633 L716,631 L718,631 L720,633 L722,633 L724,631 L726,631 L728,633 L730,633 L732,631 L734,631 L736,633 L738,633 L740,631 L742,631 L744,633 L746,633 L748,631 L750,631 L752,633 L754,633 L756,631 L758,631 L760,633 L762,633 L764,631 L766,631 L768,633 L770,633 L772,631 L774,631 L776,633 L778,633 L780,631 L782,631 L784,633 L786,633 L787,631"/><path d="M706,661 L708,659 L710,659 L712,661 L714,661 L716,659 L718,659 L720,661 L722,661 L724,659 L726,659 L728,661 L730,661 L732,659 L734,659 L736,661 L738,661 L740,659 L742,659 L744,661 L746,661 L748,659 L750,659 L752,661 L754,661 L756,659 L758,659 L760,661 L762,661 L764,659 L766,659 L768,661 L770,661 L772,659 L774,659 L776,661 L778,661 L780,659 L782,659 L784,661 L786,661 L787,659"/><path d="M706,689 L708,687 L710,687 L712,689 L714,689 L716,687 L718,687 L720,689 L722,689 L724,687 L726,687 L728,689 L730,689 L732,687 L734,687 L736,689 L738,689 L740,687 L742,687 L744,689 L746,689 L748,687 L750,687 L752,689 L754,689 L756,687 L758,687 L760,689 L762,689 L764,687 L766,687 L768,689 L770,689 L772,687 L774,687 L776,689 L778,689 L780,687 L782,687 L784,689 L786,689 L787,687"/><path d="M706,717 L708,715 L710,715 L712,717 L714,717 L716,715 L718,715 L720,717 L722,717 L724,715 L726,715 L728,717 L730,717 L732,715 L734,715 L736,717 L738,717 L740,715 L742,715 L744,717 L746,717 L748,715 L750,715 L752,717 L754,717 L756,715 L758,715 L760,717 L762,717 L764,715 L766,715 L768,717 L770,717 L772,715 L774,715 L776,717 L778,717 L780,715 L782,715 L784,717 L786,717 L787,715"/><path d="M706,745 L708,743 L710,743 L712,745 L714,745 L716,743 L718,743 L720,745 L722,745 L724,743 L726,743 L728,745 L730,745 L732,743 L734,743 L736,745 L738,745 L740,743 L742,743 L744,745 L746,745 L748,743 L750,743 L752,745 L754,745 L756,743 L758,743 L760,745 L762,745 L764,743 L766,743 L768,745 L770,745 L772,743 L774,743 L776,745 L778,745 L780,743 L782,743 L784,745 L786,745 L787,743"/><path d="M706,773 L708,771 L710,771 L712,773 L714,773 L716,771 L718,771 L720,773 L722,773 L724,771 L726,771 L728,773 L730,773 L732,771 L734,771 L736,773 L738,773 L740,771 L742,771 L744,773 L746,773 L748,771 L750,771 L752,773 L754,773 L756,771 L758,771 L760,773 L762,773 L764,771 L766,771 L768,773 L770,773 L772,771 L774,771 L776,773 L778,773 L780,771 L782,771 L784,773 L786,773 L787,771"/><path d="M706,801 L708,799 L710,799 L712,801 L714,801 L716,799 L718,799 L720,801 L722,801 L724,799 L726,799 L728,801 L730,801 L732,799 L734,799 L736,801 L738,801 L740,799 L742,799 L744,801 L746,801 L748,799 L750,799 L752,801 L754,801 L756,799 L758,799 L760,801 L762,801 L764,799 L766,799 L768,801 L770,801 L772,799 L774,799 L776,801 L778,801 L780,799 L782,799 L784,801 L786,801 L787,799"/><path d="M706,829 L708,827 L710,827 L712,829 L714,829 L716,827 L718,827 L720,829 L722,829 L724,827 L726,827 L728,829 L730,829 L732,827 L734,827 L736,829 L738,829 L740,827 L742,827 L744,829 L746,829 L748,827 L750,827 L752,829 L754,829 L756,827 L758,827 L760,829 L762,829 L764,827 L766,827 L768,829 L770,829 L772,827 L774,827 L776,829 L778,829 L780,827 L782,827 L784,829 L786,829 L787,827"/><path d="M706,857 L708,855 L710,855 L712,857 L714,857 L716,855 L718,855 L720,857 L722,857 L724,855 L726,855 L728,857 L730,857 L732,855 L734,855 L736,857 L738,857 L740,855 L742,855 L744,857 L746,857 L748,855 L750,855 L752,857 L754,857 L756,855 L758,855 L760,857 L762,857 L764,855 L766,855 L768,857 L770,857 L772,855"/></g></svg>
</body></html>
